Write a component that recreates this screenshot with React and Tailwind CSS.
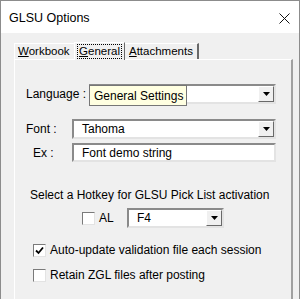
import React from 'react';

const font = { fontFamily: '"Liberation Sans", Arial, sans-serif' };

function Arrow() {
  return (
    <div className="w-[16px] h-[16px] bg-[#f0f0f0] border border-t-white border-l-white border-r-[#696969] border-b-[#696969] flex items-center justify-center shrink-0">
      <svg width="7" height="4" viewBox="0 0 7 4">
        <path d="M0 0H7L3.5 4Z" fill="#000" />
      </svg>
    </div>
  );
}

function Combo({ width, text, children }) {
  return (
    <div className={`relative ${width} h-[20px] bg-white border-2 border-t-[#8a8a8a] border-l-[#8a8a8a] border-r-[#e3e3e3] border-b-[#e3e3e3] flex items-center`}>
      <span className="flex-1 pl-[8px] text-[12px] leading-none text-black">{text}</span>
      <Arrow />
      {children}
    </div>
  );
}

function Check({ checked }) {
  return (
    <div className="w-[13px] h-[13px] bg-white border border-t-[#7a7a7a] border-l-[#7a7a7a] border-r-[#e3e3e3] border-b-[#e3e3e3] flex items-center justify-center shrink-0">
      {checked && (
        <svg width="9" height="9" viewBox="0 0 9 9">
          <path d="M1 4.5L3.5 7L8 1.5" stroke="#000" strokeWidth="1.8" fill="none" />
        </svg>
      )}
    </div>
  );
}

export default function App() {
  return (
    <div className="w-[300px] h-[299px] flex flex-col bg-white border-t border-x border-[#8c8c8c] overflow-hidden text-black" style={font}>
      {/* Title bar */}
      <div className="h-[32px] bg-white flex items-center pl-[8px] pr-[9px] pt-[2px] shrink-0">
        <span className="text-[12.5px] flex-1">GLSU Options</span>
        <svg width="11" height="11" viewBox="0 0 11 11">
          <path d="M0.5 0.5L10.5 10.5M10.5 0.5L0.5 10.5" stroke="#111" strokeWidth="1" />
        </svg>
      </div>

      <div className="flex-1 bg-[#f0f0f0] pl-[13px] pr-[4px] pt-[8px] flex flex-col">
        {/* Tabs */}
        <div className="flex items-end h-[18px] text-[11.5px]">
          <div className="h-[16px] w-[60px] pl-[3px] border-t border-l border-white flex items-center leading-none">
            <span><u>W</u>orkbook</span>
          </div>
          <div className="h-[18px] w-[51px] border-t border-l border-white border-r border-r-[#696969] bg-[#f0f0f0] flex items-center justify-center leading-none -mb-px z-10">
            <span className="border border-dotted border-black px-[1px] py-[1px]"><u>G</u>eneral</span>
          </div>
          <div className="h-[16px] w-[74px] pl-[4px] border-t border-r-2 border-white border-r-[#696969] flex items-center leading-none">
            <span><u>A</u>ttachments</span>
          </div>
        </div>

        {/* Panel */}
        <div className="flex-1 w-[279px] border-t border-l border-white border-r-2 border-r-[#a0a0a0] flex flex-col text-[12px]">
          <div className="flex items-center mt-[24px] pl-[11px]">
            <span className="w-[63px]">Language :</span>
            <Combo width="w-[187px]" text="">
              <div className="absolute left-[-2px] top-[-1px] h-[21px] bg-[#ffffe1] border border-[#767676] flex items-center pl-[4px] pr-[3px] text-[12px] leading-none whitespace-nowrap">
                General Settings
              </div>
            </Combo>
          </div>

          <div className="flex items-center mt-[15px] pl-[11px]">
            <span className="w-[46px]">Font :</span>
            <Combo width="w-[204px]" text="Tahoma" />
          </div>

          <div className="flex items-center mt-[4px] pl-[18px]">
            <span className="w-[39px]">Ex :</span>
            <div className="w-[204px] h-[19px] bg-white border-2 border-t-[#8a8a8a] border-l-[#8a8a8a] border-r-[#e3e3e3] border-b-[#e3e3e3] flex items-center pl-[8px] leading-none">
              Font demo string
            </div>
          </div>

          <div className="mt-[26px] pl-[15px] leading-[14px]">
            Select a Hotkey for GLSU Pick List activation
          </div>

          <div className="flex items-center mt-[6px] pl-[67px]">
            <Check />
            <span className="ml-[4px] w-[28px]">AL</span>
            <Combo width="w-[97px]" text="F4" />
          </div>

          <div className="flex items-center mt-[15px] pl-[18px] leading-[14px]">
            <Check checked />
            <span className="ml-[4px]">Auto-update validation file each session</span>
          </div>

          <div className="flex items-center mt-[11px] pl-[18px] leading-[14px]">
            <Check />
            <span className="ml-[4px]">Retain ZGL files after posting</span>
          </div>
        </div>
      </div>
    </div>
  );
}
